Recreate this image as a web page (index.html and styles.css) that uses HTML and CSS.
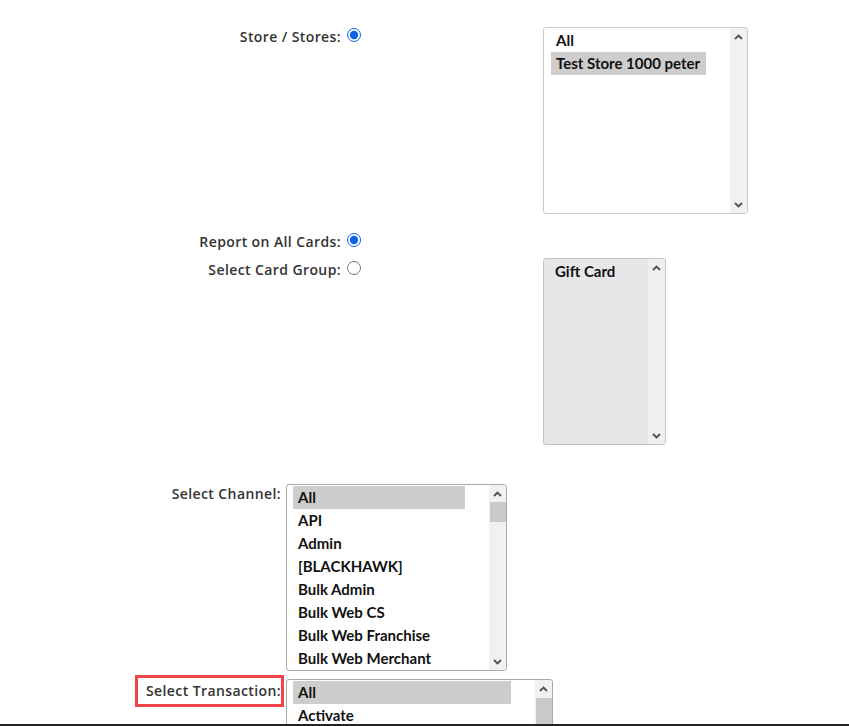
FILE: index.html
```html
<!DOCTYPE html>
<html>
<head>
<meta charset="utf-8">
<link rel="stylesheet" href="styles.css">
</head>
<body>
<div class="page">
  <section class="grid-a">
    <div class="label">Store / Stores:</div>
    <div class="ctrl"><input type="radio" name="store" checked></div>
    <div class="listbox list-store">
      <div class="opts">
        <div class="opt">All</div>
        <div class="opt sel">Test Store 1000 peter</div>
      </div>
      <div class="sbar">
        <div class="arrow"><svg width="9" height="6" viewBox="0 0 9 6"><polyline points="1,5 4.5,1.5 8,5" fill="none" stroke="#505050" stroke-width="1.8"/></svg></div>
        <div class="track"></div>
        <div class="arrow"><svg width="9" height="6" viewBox="0 0 9 6"><polyline points="1,1 4.5,4.5 8,1" fill="none" stroke="#505050" stroke-width="1.8"/></svg></div>
      </div>
    </div>
  </section>

  <section class="grid-b">
    <div class="label">Report on All Cards:</div>
    <div class="ctrl"><input type="radio" name="cards" checked></div>
    <div></div>
    <div class="label label-card">Select Card Group:</div>
    <div class="ctrl ctrl-card"><input type="radio" name="cards"></div>
    <div class="listbox list-gift">
      <div class="opts">
        <div class="opt">Gift Card</div>
      </div>
      <div class="sbar">
        <div class="arrow"><svg width="9" height="6" viewBox="0 0 9 6"><polyline points="1,5 4.5,1.5 8,5" fill="none" stroke="#505050" stroke-width="1.8"/></svg></div>
        <div class="track"></div>
        <div class="arrow"><svg width="9" height="6" viewBox="0 0 9 6"><polyline points="1,1 4.5,4.5 8,1" fill="none" stroke="#505050" stroke-width="1.8"/></svg></div>
      </div>
    </div>
  </section>

  <section class="grid-c">
    <div class="label label-c">Select Channel:</div>
    <div class="listbox list-channel">
      <div class="opts">
        <div class="opt sel">All</div>
        <div class="opt">API</div>
        <div class="opt">Admin</div>
        <div class="opt">[BLACKHAWK]</div>
        <div class="opt">Bulk Admin</div>
        <div class="opt">Bulk Web CS</div>
        <div class="opt">Bulk Web Franchise</div>
        <div class="opt">Bulk Web Merchant</div>
      </div>
      <div class="sbar">
        <div class="arrow"><svg width="9" height="6" viewBox="0 0 9 6"><polyline points="1,5 4.5,1.5 8,5" fill="none" stroke="#505050" stroke-width="1.8"/></svg></div>
        <div class="track"><div class="thumb thumb-channel"></div></div>
        <div class="arrow"><svg width="9" height="6" viewBox="0 0 9 6"><polyline points="1,1 4.5,4.5 8,1" fill="none" stroke="#505050" stroke-width="1.8"/></svg></div>
      </div>
    </div>

    <div class="label-cell">
      <span class="label boxed">Select Transaction:</span>
    </div>
    <div class="listbox list-trans">
      <div class="opts">
        <div class="opt sel">All</div>
        <div class="opt">Activate</div>
        <div class="opt">Balance</div>
        <div class="opt">Cashout</div>
      </div>
      <div class="sbar">
        <div class="arrow"><svg width="9" height="6" viewBox="0 0 9 6"><polyline points="1,5 4.5,1.5 8,5" fill="none" stroke="#505050" stroke-width="1.8"/></svg></div>
        <div class="track"><div class="thumb thumb-trans"></div></div>
        <div class="arrow"><svg width="9" height="6" viewBox="0 0 9 6"><polyline points="1,1 4.5,4.5 8,1" fill="none" stroke="#505050" stroke-width="1.8"/></svg></div>
      </div>
    </div>
  </section>
</div>
<div class="bottom-line"></div>
</body>
</html>
```

FILE: styles.css
```css
html, body {
  margin: 0;
  padding: 0;
  background: #fff;
  overflow: hidden;
}
body {
  font-family: "Lato", "Noto Sans", sans-serif;
  color: #111;
  height: 726px;
}
.page {
  padding-top: 27px;
}
.label {
  font-family: "Open Sans", "Lato", sans-serif;
  font-size: 14px;
  font-weight: 600;
  letter-spacing: 0.4px;
  color: #333;
  line-height: 18px;
  text-align: right;
  white-space: nowrap;
}
.grid-a .label,
.label-c {
  padding-top: 1px;
}
.ctrl {
  padding-left: 6px;
}
.ctrl input {
  margin: 0;
  width: 14px;
  height: 14px;
  accent-color: #0b63e5;
  display: block;
}
.grid-a, .grid-b {
  display: grid;
  grid-template-columns: 341px 202px auto;
  align-items: start;
}
.grid-a .ctrl { padding-top: 1px; }
.grid-b {
  margin-top: 17px;
  row-gap: 7px;
}
.grid-b .label { padding-top: 2px; }
.grid-b .label-card { padding-top: 3px; }
.grid-b .ctrl { padding-top: 2px; }
.grid-b .ctrl-card { padding-top: 3px; }

.grid-c {
  margin-top: 39px;
  display: grid;
  grid-template-columns: 286px auto;
  row-gap: 8px;
  align-items: start;
}
.label-c {
  padding-right: 5px;
}
.label-cell {
  display: flex;
  justify-content: flex-end;
  padding-right: 2px;
}
.boxed {
  margin-top: -4px;
  border: 3px solid #f0434a;
  padding: 4px 0 4px 8px;
}

.listbox {
  box-sizing: border-box;
  height: 187px;
  border: 1px solid #b9b9b9;
  border-radius: 3px;
  display: flex;
  background: #fff;
  overflow: hidden;
}
.list-store { width: 205px; border-color: #c9c9c9; }
.list-gift { width: 123px; background: #e7e7e7; border-color: #c4c4c4; }
.list-channel { width: 221px; border-color: #a9a9a9; }
.list-trans { width: 267px; border-color: #a9a9a9; }

.opts {
  flex: 1;
  padding: 1px 0 0 6px;
  min-width: 0;
}
.opt {
  font-size: 15px;
  font-weight: 700;
  line-height: 23px;
  height: 23px;
  padding: 0 5px;
  white-space: nowrap;
  color: #111;
  box-sizing: border-box;
}
.list-store .opts { padding-left: 7px; }
.list-store .opt { width: 155px; }
.list-channel .opt { width: 172px; }
.list-trans .opt { width: 218px; }
.opt.sel { background: #cdcdcd; }

.sbar {
  width: 17px;
  flex: none;
  background: #f1f1f1;
  display: flex;
  flex-direction: column;
}
.list-gift .sbar { background: #efefef; }
.arrow {
  height: 17px;
  display: flex;
  align-items: center;
  justify-content: center;
  flex: none;
}
.track {
  flex: 1;
  position: relative;
}
.thumb {
  background: #c9c9c9;
  margin: 0 0 0 1px;
}
.thumb-channel { height: 20px; }
.thumb-trans { height: 60px; margin-top: 1px; }

.bottom-line {
  position: fixed;
  left: 0;
  right: 0;
  bottom: 0;
  height: 2px;
  background: #222;
}
```
